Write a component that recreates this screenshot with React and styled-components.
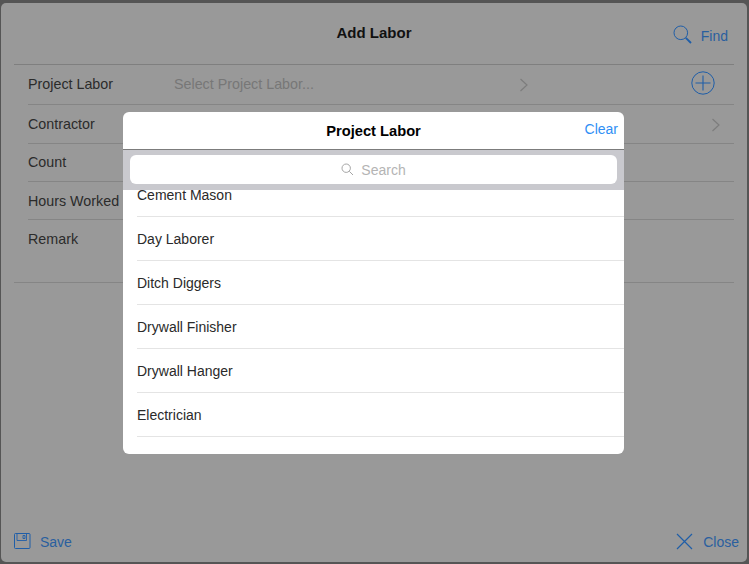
import React from 'react';
import styled, { createGlobalStyle } from 'styled-components';

const Global = createGlobalStyle`
  html, body {
    margin: 0;
    padding: 0;
    background: #4f4f4f;
  }
  * { box-sizing: border-box; }
`;

const Page = styled.div`
  position: relative;
  width: 749px;
  height: 564px;
  padding: 3px 2px 2px 1px;
  overflow: hidden;
  background: #555;
  font-family: "Liberation Sans", Arial, sans-serif;
`;

const Sheet = styled.div`
  height: 559px;
  display: flex;
  flex-direction: column;
  background: #999;
  border-radius: 5px;
`;

const Header = styled.div`
  height: 62px;
  flex: none;
  margin-left: 13px;
  margin-right: 13px;
  display: grid;
  grid-template-columns: 1fr auto 1fr;
  align-items: center;
  border-bottom: 1px solid #7f7f7f;
`;

const Title = styled.div`
  grid-column: 2;
  margin-top: -2px;
  font-size: 15px;
  font-weight: 700;
  color: #111;
`;

const ActionLink = styled.div`
  display: flex;
  align-items: center;
  gap: ${p => p.$gap || 10}px;
  color: #2a5f9f;
  font-size: 14px;
`;

const FindLink = styled(ActionLink)`
  justify-self: end;
  margin-right: 6px;
  margin-top: 2px;
`;

const FindLabel = styled.span`
  padding-top: 2px;
`;

const Form = styled.div`
  flex: none;
  padding-left: 27px;
  margin-right: 13px;
`;

const Row = styled.div`
  height: ${p => p.$h}px;
  display: flex;
  align-items: ${p => p.$top ? 'flex-start' : 'center'};
  padding-top: ${p => p.$top ? 11 : 0}px;
  padding-bottom: ${p => p.$raised ? 2 : 0}px;
  border-bottom: ${p => p.$last ? 'none' : '1px solid #858585'};
  font-size: 14.3px;
`;

const RowLabel = styled.div`
  width: 146px;
  flex: none;
  color: #2b2b2b;
`;

const Placeholder = styled.div`
  width: 345px;
  flex: none;
  color: #777;
`;

const PlusButton = styled.svg`
  width: 24px;
  height: 24px;
  margin-left: 162px;
  margin-top: -1px;
  flex: none;
`;

const Divider = styled.div`
  margin-left: 13px;
  margin-right: 13px;
  border-top: 1px solid #858585;
`;

const Spacer = styled.div`
  flex: 1;
`;

const Footer = styled.div`
  height: 42px;
  flex: none;
  display: flex;
  align-items: flex-start;
  justify-content: space-between;
  padding: 13px 8px 0 13px;
`;

const Chevron = styled.svg`
  width: 10px;
  height: 16px;
  flex: none;
`;

const RaisedRowChevron = styled(Chevron)`
  margin-top: 2px;
`;

const ContractorChevron = styled(Chevron)`
  margin-left: 537px;
  margin-top: 1px;
`;

const Modal = styled.div`
  position: absolute;
  left: 123px;
  top: 112px;
  width: 501px;
  height: 342px;
  display: flex;
  flex-direction: column;
  background: #fff;
  border-radius: 6px;
  overflow: hidden;
`;

const ModalHeader = styled.div`
  height: 38px;
  flex: none;
  position: relative;
  display: flex;
  align-items: center;
  justify-content: center;
  border-bottom: 1px solid #7c7c7c;
`;

const ModalTitle = styled.div`
  font-size: 14.7px;
  font-weight: 700;
  color: #000;
`;

const ClearLink = styled.div`
  position: absolute;
  right: 6px;
  top: 9px;
  font-size: 14px;
  color: #2f8ff5;
`;

const SearchBar = styled.div`
  height: 40px;
  flex: none;
  padding: 5px 7px 6px;
  background: #c9c9ce;
`;

const SearchField = styled.div`
  height: 29px;
  display: flex;
  align-items: center;
  justify-content: center;
  gap: 7px;
  background: #fff;
  border-radius: 6px;
  color: #b4b4b4;
  font-size: 14px;
`;

const List = styled.div`
  flex: 1;
  overflow: hidden;
  padding-left: 14px;
`;

const ListRow = styled.div`
  height: 44px;
  display: flex;
  align-items: center;
  border-bottom: 1px solid #e4e4e4;
  color: #2a2a2a;
  font-size: 14px;
`;

const FirstRow = styled(ListRow)`
  height: 27px;
  align-items: flex-end;
  padding-bottom: 13px;
`;

const items = ['Day Laborer', 'Ditch Diggers', 'Drywall Finisher', 'Drywall Hanger', 'Electrician'];

const blue = '#1f5ea8';

function ChevronIcon() {
  return (
    <path d="M1.5 2 L8 8 L1.5 14" fill="none" stroke="#7d7d7d" strokeWidth="1.2" />
  );
}

export default function App() {
  return (
    <Page>
      <Global />
      <Sheet>
        <Header>
          <Title>Add Labor</Title>
          <FindLink $gap={9}>
            <svg width="19" height="19" viewBox="0 0 19 19" fill="none">
              <circle cx="7.8" cy="7.8" r="6.8" stroke={blue} strokeWidth="1" />
              <path d="M12.8 12.8 L18 18" stroke={blue} strokeWidth="1.9" />
            </svg>
            <FindLabel>Find</FindLabel>
          </FindLink>
        </Header>
        <Form>
          <Row $h={40} $raised>
            <RowLabel>Project Labor</RowLabel>
            <Placeholder>Select Project Labor...</Placeholder>
            <RaisedRowChevron viewBox="0 0 10 16"><ChevronIcon /></RaisedRowChevron>
            <PlusButton viewBox="0 0 24 24" fill="none">
              <circle cx="12" cy="12" r="11.2" stroke={blue} strokeWidth="1" />
              <path d="M12 4.5 V19.5 M4.5 12 H19.5" stroke={blue} strokeWidth="1.1" />
            </PlusButton>
          </Row>
          <Row $h={39}>
            <RowLabel>Contractor</RowLabel>
            <ContractorChevron viewBox="0 0 10 16"><ChevronIcon /></ContractorChevron>
          </Row>
          <Row $h={38} $raised><RowLabel>Count</RowLabel></Row>
          <Row $h={38}><RowLabel>Hours Worked</RowLabel></Row>
          <Row $h={62} $top $last><RowLabel>Remark</RowLabel></Row>
        </Form>
        <Divider />
        <Spacer />
        <Footer>
          <ActionLink $gap={9}>
            <svg width="17" height="17" viewBox="0 0 17 17" fill="none">
              <rect x="0.5" y="0.5" width="15.5" height="15" rx="1" stroke={blue} />
              <path d="M3 1 V7.5 H12.5 V1 M9 2.5 H11 V5.5 H9 Z" stroke={blue} strokeWidth="0.9" />
            </svg>
            <span>Save</span>
          </ActionLink>
          <ActionLink $gap={10}>
            <svg width="17" height="17" viewBox="0 0 17 17" fill="none">
              <path d="M1 1 L16 16 M16 1 L1 16" stroke={blue} strokeWidth="1.2" />
            </svg>
            <span>Close</span>
          </ActionLink>
        </Footer>
      </Sheet>
      <Modal>
        <ModalHeader>
          <ModalTitle>Project Labor</ModalTitle>
          <ClearLink>Clear</ClearLink>
        </ModalHeader>
        <SearchBar>
          <SearchField>
            <svg width="13" height="13" viewBox="0 0 13 13" fill="none">
              <circle cx="5.2" cy="5.2" r="4.2" stroke="#a5a5a5" />
              <path d="M8.3 8.3 L12 12" stroke="#a5a5a5" />
            </svg>
            <span>Search</span>
          </SearchField>
        </SearchBar>
        <List>
          <FirstRow>Cement Mason</FirstRow>
          {items.map(item => <ListRow key={item}>{item}</ListRow>)}
        </List>
      </Modal>
    </Page>
  );
}
